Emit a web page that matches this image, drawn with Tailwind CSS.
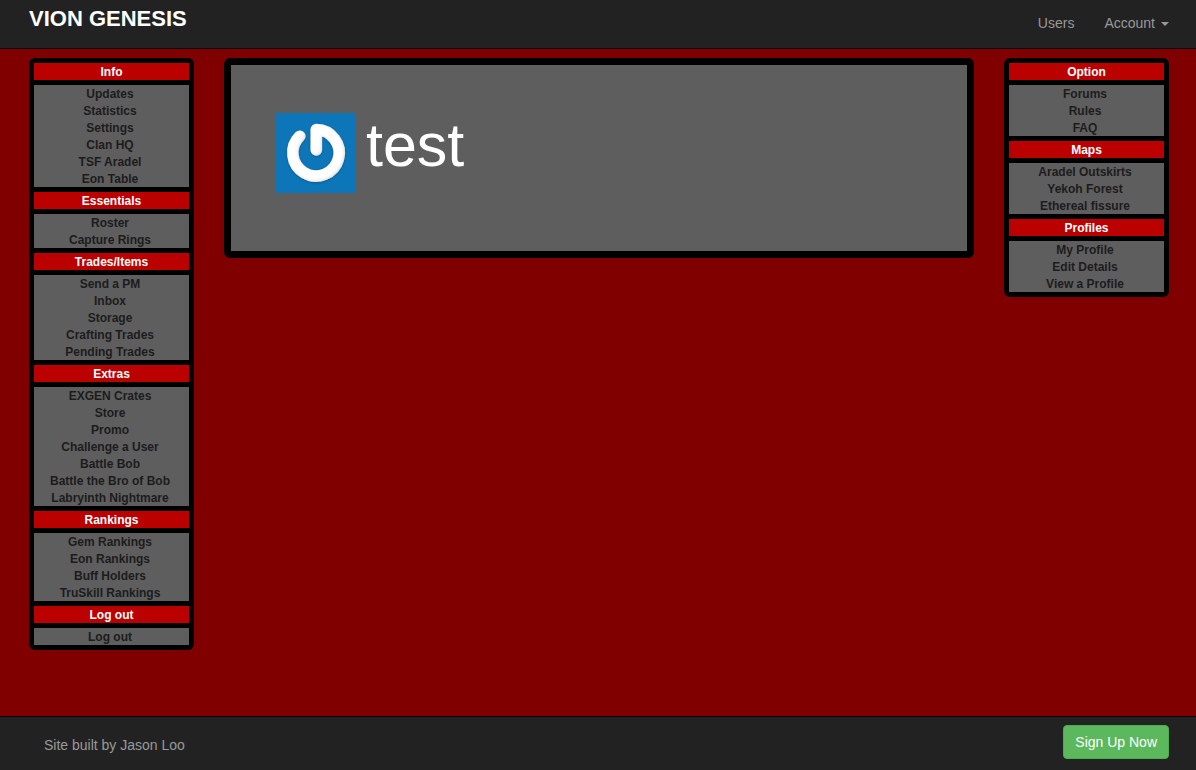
<!DOCTYPE html>
<html lang="en">
<head>
<meta charset="utf-8">
<meta name="viewport" content="width=device-width, initial-scale=1">
<title>Vion Genesis</title>
<script src="https://cdn.jsdelivr.net/npm/@tailwindcss/browser@4"></script>
</head>
<body class="flex min-h-screen flex-col bg-[#800000] font-['Liberation_Sans',Arial,sans-serif] text-sm text-[#999]">
<header class="flex items-start justify-between border-b border-[#080808] bg-[#222] pr-[27px] pl-[29px]">
  <a href="#" class="pt-1 text-[22px] leading-[30px] font-bold text-white uppercase">Vion Genesis</a>
  <nav class="flex gap-[30px] pt-[13px] pb-[15px] leading-5">
    <a href="#">Users</a>
    <button type="button" class="flex items-center gap-[6px]">Account
      <svg class="mt-[2px] h-1 w-2" viewBox="0 0 8 4" aria-hidden="true"><path d="M0 0h8L4 4z" fill="currentColor"/></svg>
    </button>
  </nav>
</header>

<div class="flex flex-1 items-start gap-[30px] pt-[9px] pr-[27px] pb-8 pl-[29px]">
  <nav aria-label="Game" class="flex w-[165px] shrink-0 flex-col gap-[5px] rounded-md bg-black p-[5px] text-center text-xs leading-4 text-[#1c1c1c]">
    <h2 class="bg-[#bb0000] pt-px font-bold text-white">Info</h2>
    <ul class="bg-[#5e5e5e] pr-[3px] font-bold *:pt-px">
      <li><a href="#">Updates</a></li>
      <li><a href="#">Statistics</a></li>
      <li><a href="#">Settings</a></li>
      <li><a href="#">Clan HQ</a></li>
      <li><a href="#">TSF Aradel</a></li>
      <li><a href="#">Eon Table</a></li>
    </ul>
    <h2 class="bg-[#bb0000] pt-px font-bold text-white">Essentials</h2>
    <ul class="bg-[#5e5e5e] pr-[3px] font-bold *:pt-px">
      <li><a href="#">Roster</a></li>
      <li><a href="#">Capture Rings</a></li>
    </ul>
    <h2 class="bg-[#bb0000] pt-px font-bold text-white">Trades/Items</h2>
    <ul class="bg-[#5e5e5e] pr-[3px] font-bold *:pt-px">
      <li><a href="#">Send a PM</a></li>
      <li><a href="#">Inbox</a></li>
      <li><a href="#">Storage</a></li>
      <li><a href="#">Crafting Trades</a></li>
      <li><a href="#">Pending Trades</a></li>
    </ul>
    <h2 class="bg-[#bb0000] pt-px font-bold text-white">Extras</h2>
    <ul class="bg-[#5e5e5e] pr-[3px] font-bold *:pt-px">
      <li><a href="#">EXGEN Crates</a></li>
      <li><a href="#">Store</a></li>
      <li><a href="#">Promo</a></li>
      <li><a href="#">Challenge a User</a></li>
      <li><a href="#">Battle Bob</a></li>
      <li><a href="#">Battle the Bro of Bob</a></li>
      <li><a href="#">Labryinth Nightmare</a></li>
    </ul>
    <h2 class="bg-[#bb0000] pt-px font-bold text-white">Rankings</h2>
    <ul class="bg-[#5e5e5e] pr-[3px] font-bold *:pt-px">
      <li><a href="#">Gem Rankings</a></li>
      <li><a href="#">Eon Rankings</a></li>
      <li><a href="#">Buff Holders</a></li>
      <li><a href="#">TruSkill Rankings</a></li>
    </ul>
    <h2 class="bg-[#bb0000] pt-px font-bold text-white">Log out</h2>
    <ul class="bg-[#5e5e5e] pr-[3px] font-bold *:pt-px">
      <li><a href="#">Log out</a></li>
    </ul>
  </nav>

  <main class="min-w-0 flex-1 rounded-md border-[7px] border-black bg-[#5e5e5e] px-[45px] pt-12 pb-[58px]">
    <h1 class="flex items-start gap-[10px] text-[61px] leading-[64px] text-white">
      <svg class="size-20 shrink-0" viewBox="0 0 80 80" role="img" aria-label="test">
        <defs>
          <filter id="bevel" x="-20%" y="-20%" width="140%" height="140%">
            <feGaussianBlur in="SourceAlpha" stdDeviation="1.6" result="soft"/>
            <feOffset in="soft" dx="-1" dy="-1" result="moved"/>
            <feComposite in="SourceAlpha" in2="moved" operator="out" result="edge"/>
            <feFlood flood-color="#777" flood-opacity=".35"/>
            <feComposite in2="edge" operator="in" result="shade"/>
            <feDropShadow in="SourceGraphic" dx="0" dy="1" stdDeviation="1" flood-color="#033a66" flood-opacity=".5" result="base"/>
            <feMerge><feMergeNode in="base"/><feMergeNode in="shade"/></feMerge>
          </filter>
        </defs>
        <rect width="80" height="80" fill="#0d76b8"/>
        <path d="M23.8 23.2A23.2 23.2 0 1 0 40.3 16.6V37" fill="none" stroke="#fff" stroke-width="11.6" stroke-linecap="round" stroke-linejoin="round" filter="url(#bevel)"/>
      </svg>
      test
    </h1>
  </main>

  <nav aria-label="Player" class="flex w-[165px] shrink-0 flex-col gap-[5px] rounded-md bg-black p-[5px] text-center text-xs leading-4 text-[#1c1c1c]">
    <h2 class="bg-[#bb0000] pt-px font-bold text-white">Option</h2>
    <ul class="bg-[#5e5e5e] pr-[3px] font-bold *:pt-px">
      <li><a href="#">Forums</a></li>
      <li><a href="#">Rules</a></li>
      <li><a href="#">FAQ</a></li>
    </ul>
    <h2 class="bg-[#bb0000] pt-px font-bold text-white">Maps</h2>
    <ul class="bg-[#5e5e5e] pr-[3px] font-bold *:pt-px">
      <li><a href="#">Aradel Outskirts</a></li>
      <li><a href="#">Yekoh Forest</a></li>
      <li><a href="#">Ethereal fissure</a></li>
    </ul>
    <h2 class="bg-[#bb0000] pt-px font-bold text-white">Profiles</h2>
    <ul class="bg-[#5e5e5e] pr-[3px] font-bold *:pt-px">
      <li><a href="#">My Profile</a></li>
      <li><a href="#">Edit Details</a></li>
      <li><a href="#">View a Profile</a></li>
    </ul>
  </nav>
</div>

<footer class="flex items-start justify-between border-t border-[#080808] bg-[#222] pt-2 pr-[27px] pb-[11px] pl-11">
  <p class="pt-[10px] leading-5">Site built by Jason Loo</p>
  <button type="button" class="rounded border border-[#4cae4c] bg-[#5cb85c] px-[11px] py-[6px] leading-5 text-white">Sign Up Now</button>
</footer>
</body>
</html>
